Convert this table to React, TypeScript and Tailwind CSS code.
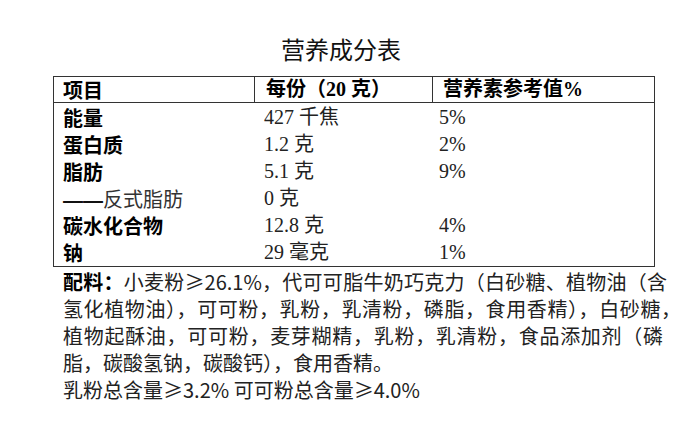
const rows = [
  { label: "能量", value: "427 千焦", pct: "5%", kind: "bold" },
  { label: "蛋白质", value: "1.2 克", pct: "2%", kind: "bold" },
  { label: "脂肪", value: "5.1 克", pct: "9%", kind: "bold" },
  { label: "反式脂肪", value: "0 克", pct: "", kind: "sub" },
  { label: "碳水化合物", value: "12.8 克", pct: "4%", kind: "bold" },
  { label: "钠", value: "29 毫克", pct: "1%", kind: "bold" },
];

export default function App() {
  return (
    <div className="w-[690px] h-[434px] bg-white text-black overflow-hidden">
      <div className="pt-[33px] pr-2 text-center text-[24px] leading-[32px] text-[#111] font-['Noto_Sans_CJK_SC',sans-serif]">
        营养成分表
      </div>
      <div className="ml-[53px] mt-[11px] w-[602px] border border-[#333]">
        <div className="grid grid-cols-[200px_178px_1fr] h-[26px] border-b border-[#333] font-bold text-[20px] leading-[25px] font-['Liberation_Serif','Noto_Sans_CJK_SC',serif]">
          <div className="pl-[9px] font-['Noto_Sans_CJK_SC',sans-serif]">项目</div>
          <div className="pl-[11px] border-l border-[#333]">每份（20 克）</div>
          <div className="pl-[10px] border-l border-[#333]">营养素参考值%</div>
        </div>
        <div className="pt-[1px]">
          {rows.map((r) => (
            <div
              key={r.label}
              className="grid grid-cols-[200px_178px_1fr] h-[27px] text-[20px] leading-[27px]"
            >
              {r.kind === "bold" ? (
                <div className="pl-[9px] font-bold font-['Noto_Sans_CJK_SC',sans-serif]">
                  {r.label}
                </div>
              ) : (
                <div className="pl-[9px] text-[#333] whitespace-nowrap font-['Noto_Sans_CJK_SC',sans-serif]">
                  <span className="font-bold text-[#111] font-['Liberation_Sans',sans-serif]">——</span>
                  {r.label}
                </div>
              )}
              <div className="pl-[10px] text-[#222] font-['Liberation_Serif','Noto_Sans_CJK_SC',serif]">
                {r.value}
              </div>
              <div className="pl-[7px] text-[#222] font-['Liberation_Serif','Noto_Sans_CJK_SC',serif]">
                {r.pct}
              </div>
            </div>
          ))}
        </div>
      </div>
      <div className="pl-[63px] pt-[1px] text-[20px] leading-[27px] text-[#222] font-['Noto_Sans_CJK_SC',sans-serif]">
        <div className="w-[604px] whitespace-nowrap text-justify [text-align-last:justify]">
          <span className="font-bold text-black">配料：</span>小麦粉≥26.1%，代可可脂牛奶巧克力（白砂糖、植物油（含
        </div>
        <div className="w-[618px] whitespace-nowrap text-justify [text-align-last:justify]">
          氢化植物油），可可粉，乳粉，乳清粉，磷脂，食用香精），白砂糖，
        </div>
        <div className="w-[600px] whitespace-nowrap text-justify [text-align-last:justify]">
          植物起酥油，可可粉，麦芽糊精，乳粉，乳清粉，食品添加剂（磷
        </div>
        <div className="whitespace-nowrap">脂，碳酸氢钠，碳酸钙），食用香精。</div>
        <div className="whitespace-nowrap">乳粉总含量≥3.2% 可可粉总含量≥4.0%</div>
      </div>
    </div>
  );
}
